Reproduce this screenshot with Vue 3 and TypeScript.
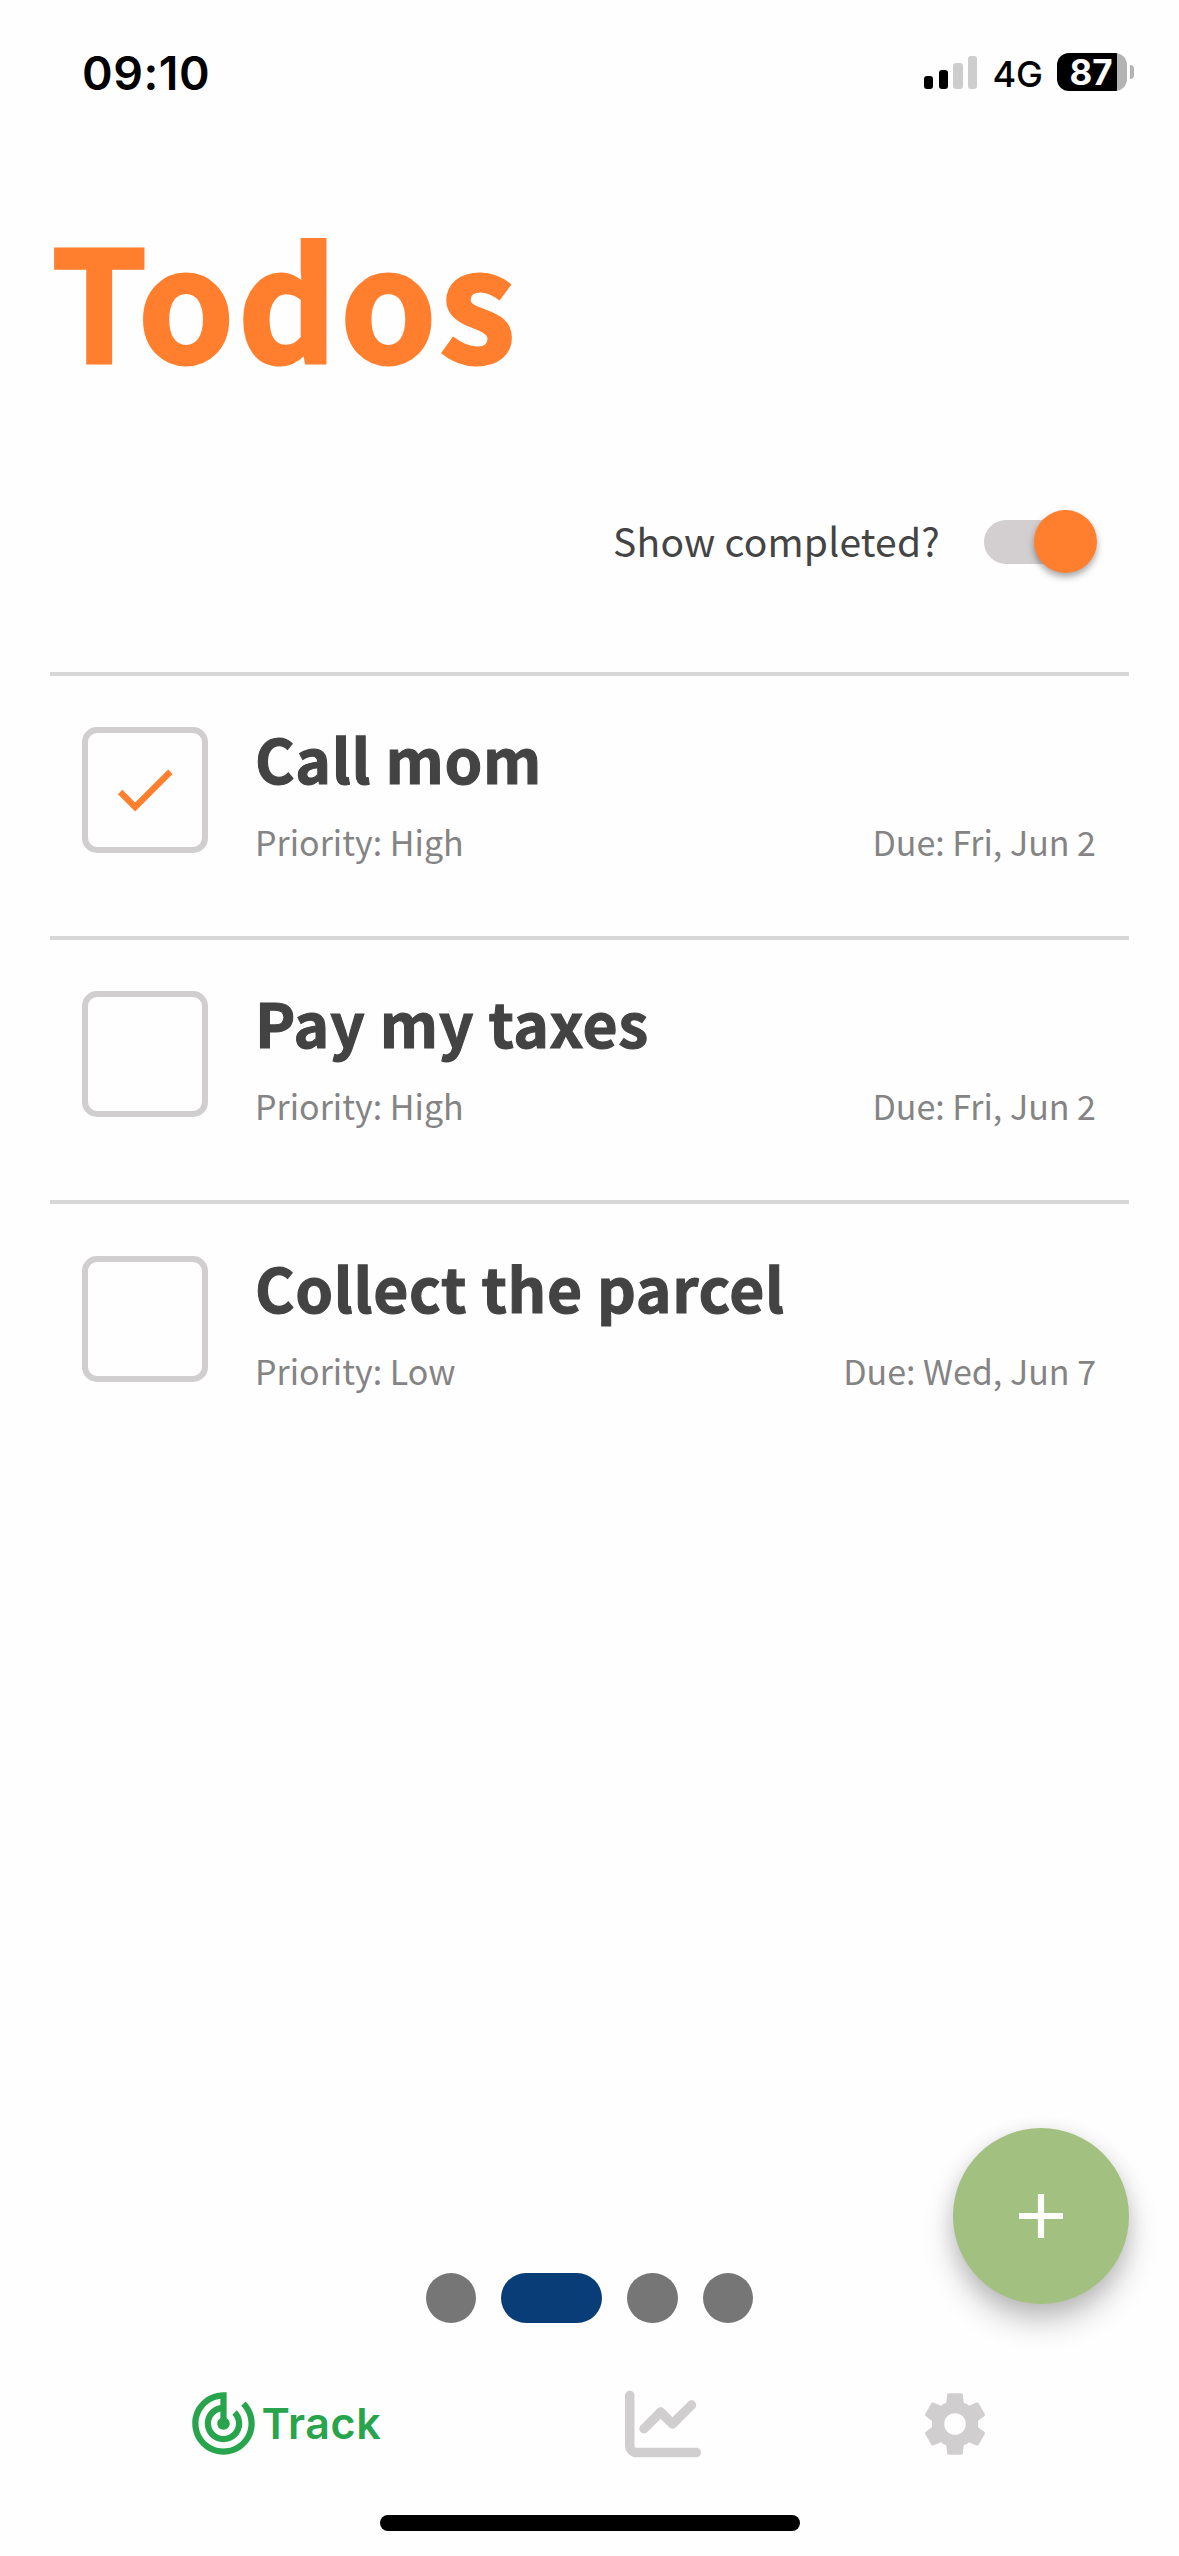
<script setup lang="ts">
import { ref } from 'vue'

interface Todo {
  id: number
  title: string
  priority: string
  due: string
  done: boolean
}

const todos = ref<Todo[]>([
  { id: 1, title: 'Call mom', priority: 'High', due: 'Fri, Jun 2', done: true },
  { id: 2, title: 'Pay my taxes', priority: 'High', due: 'Fri, Jun 2', done: false },
  { id: 3, title: 'Collect the parcel', priority: 'Low', due: 'Wed, Jun 7', done: false },
])
const pages = [false, true, false, false]
const bars = [
  { height: 13, on: true },
  { height: 19, on: true },
  { height: 26, on: false },
  { height: 33, on: false },
]
</script>

<template>
  <div class="screen">
    <header class="status">
      <span class="clock">09:10</span>
      <div class="signal">
        <i v-for="(b, i) in bars" :key="i" :class="{ on: b.on }" :style="{ height: b.height + 'px' }"></i>
      </div>
      <span class="network">4G</span>
      <div class="battery"><span>87</span></div>
      <i class="nub"></i>
    </header>

    <h1 class="heading">Todos</h1>

    <div class="filter">
      <span class="filter-label">Show completed?</span>
      <div class="switch"><i class="thumb"></i></div>
    </div>

    <ul class="list">
      <li v-for="t in todos" :key="t.id" class="row">
        <div class="box">
          <svg v-if="t.done" class="check" viewBox="0 0 24 24" width="75" height="75">
            <path d="M21 7 9 19l-5.5-5.5 1.41-1.41L9 16.17 19.59 5.59z" fill="#ff7f2e" />
          </svg>
        </div>
        <div class="body">
          <h2 class="title">{{ t.title }}</h2>
          <div class="meta">
            <span>Priority: {{ t.priority }}</span>
            <span>Due: {{ t.due }}</span>
          </div>
        </div>
      </li>
    </ul>

    <div class="pager">
      <i v-for="(active, i) in pages" :key="i" :class="{ active }"></i>
    </div>

    <nav class="tabs">
      <div class="tab track">
        <svg viewBox="0 0 24 24" width="75" height="75" fill="#28a44c">
          <path d="M19.07 4.93l-1.41 1.41C19.1 7.79 20 9.79 20 12c0 4.42-3.58 8-8 8s-8-3.58-8-8c0-4.08 3.05-7.44 7-7.93v2.02C8.16 6.57 6 9.03 6 12c0 3.31 2.69 6 6 6s6-2.69 6-6c0-1.66-.67-3.16-1.76-4.24l-1.41 1.41C15.55 9.9 16 10.9 16 12c0 2.21-1.79 4-4 4s-4-1.79-4-4c0-1.86 1.28-3.41 3-3.86v2.14c-.6.35-1 .98-1 1.72 0 1.1.9 2 2 2s2-.9 2-2c0-.74-.4-1.38-1-1.72V2h-1C6.48 2 2 6.48 2 12s4.48 10 10 10 10-4.48 10-10c0-2.76-1.12-5.26-2.93-7.07z" />
        </svg>
        <span>Track</span>
      </div>
      <svg class="tab chart" viewBox="0 0 512 512" width="76" height="76" fill="#d1cecf">
        <path d="M64 64c0-17.7-14.3-32-32-32S0 46.3 0 64V400c0 44.2 35.8 80 80 80H480c17.7 0 32-14.3 32-32s-14.3-32-32-32H80c-8.8 0-16-7.2-16-16V64zm406.6 86.6c12.5-12.5 12.5-32.8 0-45.3s-32.8-12.5-45.3 0L320 210.7l-57.4-57.4c-12.5-12.5-32.8-12.5-45.3 0l-112 112c-12.5 12.5-12.5 32.8 0 45.3s32.8 12.5 45.3 0L240 221.3l57.4 57.4c12.5 12.5 32.8 12.5 45.3 0l128-128z" />
      </svg>
      <svg class="tab gear" viewBox="0 0 24 24" width="74" height="74" fill="#d1cecf">
        <path d="M12 15.5A3.5 3.5 0 0 1 8.5 12 3.5 3.5 0 0 1 12 8.5 3.5 3.5 0 0 1 15.5 12 3.5 3.5 0 0 1 12 15.5M19.43 12.97C19.47 12.65 19.5 12.33 19.5 12 19.5 11.67 19.47 11.34 19.43 11L21.54 9.37C21.73 9.22 21.78 8.95 21.66 8.73L19.66 5.27C19.54 5.05 19.27 4.96 19.05 5.05L16.56 6.05C16.04 5.66 15.5 5.32 14.87 5.07L14.5 2.42C14.46 2.18 14.25 2 14 2H10C9.75 2 9.54 2.18 9.5 2.42L9.13 5.07C8.5 5.32 7.96 5.66 7.44 6.05L4.95 5.05C4.73 4.96 4.46 5.05 4.34 5.27L2.34 8.73C2.21 8.95 2.27 9.22 2.46 9.37L4.57 11C4.53 11.34 4.5 11.67 4.5 12 4.5 12.33 4.53 12.65 4.57 12.97L2.46 14.63C2.27 14.78 2.21 15.05 2.34 15.27L4.34 18.73C4.46 18.95 4.73 19.03 4.95 18.95L7.44 17.94C7.96 18.34 8.5 18.68 9.13 18.93L9.5 21.58C9.54 21.82 9.75 22 10 22H14C14.25 22 14.46 21.82 14.5 21.58L14.87 18.93C15.5 18.67 16.04 18.34 16.56 17.94L19.05 18.95C19.27 19.03 19.54 18.95 19.66 18.73L21.66 15.27C21.78 15.05 21.73 14.78 21.54 14.63L19.43 12.97Z" />
      </svg>
    </nav>

    <div class="home"></div>

    <button class="fab" aria-label="Add todo">
      <svg viewBox="0 0 44 44" width="44" height="44">
        <path d="M22 0v44M0 22h44" stroke="#fff" stroke-width="6.2" />
      </svg>
    </button>
  </div>
</template>

<style>
body {
  margin: 0;
  background: #fefefe;
}
</style>

<style scoped>
.screen {
  position: relative;
  display: flex;
  flex-direction: column;
  width: 1179px;
  height: 2556px;
  overflow: hidden;
  background: #fefefe;
  font-family: 'Noto Sans CJK JP', 'Noto Sans', sans-serif;
}

.status {
  display: flex;
  align-items: flex-start;
  height: 195px;
  padding-left: 82px;
  color: #000;
  font-family: Inter, sans-serif;
}
.clock {
  width: 842px;
  margin-top: 43px;
  font-size: 46.5px;
  font-weight: 600;
  line-height: 60px;
  letter-spacing: 0.5px;
}
.signal {
  display: flex;
  align-items: flex-end;
  gap: 5.3px;
  height: 89px;
}
.signal i {
  width: 9.4px;
  border-radius: 3px;
  background: #cdcdcd;
}
.signal i.on {
  background: #000;
}
.network {
  width: 65px;
  margin-left: 15px;
  margin-top: 49px;
  font-size: 36px;
  font-weight: 500;
  line-height: 50px;
}
.battery {
  width: 70px;
  height: 38px;
  margin-top: 53px;
  border-radius: 12px;
  background: linear-gradient(90deg, #000 60px, #b3b3b3 60px);
  color: #fff;
  font-size: 35px;
  font-weight: 700;
  line-height: 38px;
  text-indent: 12px;
}
.nub {
  width: 4px;
  height: 14px;
  margin: 65px 0 0 3px;
  border-radius: 0 5px 5px 0;
  background: #b3b3b3;
}

.heading {
  margin: 0 0 0 51px;
  padding-top: 2px;
  color: #ff7f2e;
  font-size: 154.5px;
  font-weight: 700;
  line-height: 198px;
  letter-spacing: 3px;
  -webkit-text-stroke: 3px #ff7f2e;
}

.filter {
  display: flex;
  justify-content: flex-end;
  margin: 115px 82px 0 0;
  height: 63px;
}
.filter-label {
  color: #444;
  font-size: 39px;
  line-height: 61px;
  letter-spacing: 0.2px;
}
.switch {
  display: flex;
  justify-content: flex-end;
  align-items: center;
  width: 113px;
  margin-left: 44px;
}
.switch::before {
  content: '';
  width: 102px;
  height: 44px;
  margin-right: -52px;
  border-radius: 22px;
  background: #d3cecf;
}
.thumb {
  z-index: 1;
  flex: none;
  width: 63px;
  height: 63px;
  border-radius: 50%;
  background: #ff7f2e;
  box-shadow: 0 4px 7px rgba(0, 0, 0, 0.35);
}

.list {
  margin: 98.6px 50px 0;
  padding: 0;
  list-style: none;
}
.row {
  display: flex;
  box-sizing: border-box;
  height: 264.4px;
  padding: 41.4px 33px 0 32px;
  border-top: 4px solid #d7d7d7;
}
.box {
  display: flex;
  align-items: center;
  justify-content: center;
  box-sizing: border-box;
  width: 126px;
  height: 126px;
  margin-top: 10px;
  border: 6px solid #d1cecf;
  border-radius: 15px;
}
.check {
  margin-right: 2px;
}
.body {
  flex: 1;
  margin-left: 47px;
}
.title {
  margin: 1px 0 0;
  color: #434343;
  font-size: 60.5px;
  font-weight: 700;
  line-height: 80px;
  letter-spacing: 0.65px;
  -webkit-text-stroke: 1.1px #434343;
}
.meta {
  display: flex;
  justify-content: space-between;
  margin-top: 22px;
  color: #848484;
  font-size: 34px;
  line-height: 44px;
}

.pager {
  display: flex;
  justify-content: center;
  gap: 25.2px;
  margin-top: auto;
}
.pager i {
  width: 50.2px;
  height: 50px;
  border-radius: 25px;
  background: #767676;
}
.pager i.active {
  width: 100.8px;
  background: #083d77;
}

.tabs {
  display: flex;
  align-items: center;
  height: 75px;
  margin-top: 63px;
  padding-left: 185.5px;
}
.track {
  display: flex;
  align-items: center;
  width: 439.5px;
  color: #28a44c;
  font-family: Inter, sans-serif;
  font-size: 43px;
  font-weight: 600;
  letter-spacing: 0.6px;
}
.track span {
  margin: -2px 0 0 1px;
}
.gear {
  margin-left: 217px;
}

.home {
  width: 420px;
  height: 16px;
  margin: 54px 0 25px 379.5px;
  border-radius: 8px;
  background: #000;
}

.fab {
  position: absolute;
  right: 50px;
  bottom: 252px;
  display: flex;
  align-items: center;
  justify-content: center;
  width: 176px;
  height: 176px;
  padding: 0;
  border: 0;
  border-radius: 50%;
  background: #a2c080;
  box-shadow: 0 18px 30px rgba(0, 0, 0, 0.22), 0 4px 20px rgba(0, 0, 0, 0.1);
}
</style>
